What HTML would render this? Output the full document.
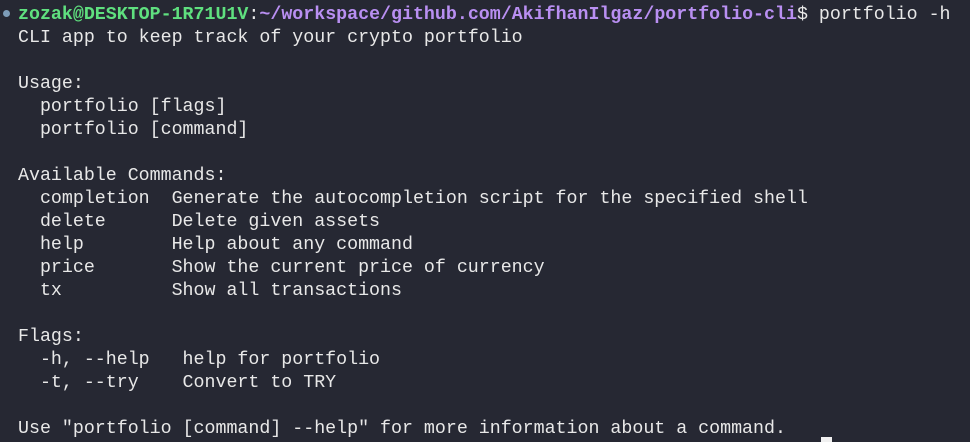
<!DOCTYPE html><html><head><style>
html,body{margin:0;width:970px;height:442px;overflow:hidden;background:#262833;}
pre{margin:0;position:absolute;left:18px;top:4px;font-family:"Liberation Mono",monospace;font-size:18.3px;line-height:23px;color:#e8e8e8;white-space:pre;}
.g{color:#5fe07f;font-weight:bold}.p{color:#b98ff2;font-weight:bold}
.dot{position:absolute;left:3px;top:10px;width:7px;height:7px;border-radius:50%;background:#7d9cb8}
.cur{position:absolute;left:821px;top:437px;width:11px;height:5px;background:#f0f0f0}
</style></head><body><div class="dot"></div><pre><span class="g">zozak@DESKTOP-1R71U1V</span>:<span class="p">~/workspace/github.com/AkifhanIlgaz/portfolio-cli</span>$ portfolio -h
CLI app to keep track of your crypto portfolio

Usage:
  portfolio [flags]
  portfolio [command]

Available Commands:
  completion  Generate the autocompletion script for the specified shell
  delete      Delete given assets
  help        Help about any command
  price       Show the current price of currency
  tx          Show all transactions

Flags:
  -h, --help   help for portfolio
  -t, --try    Convert to TRY

Use "portfolio [command] --help" for more information about a command.</pre><div class="cur"></div></body></html>
